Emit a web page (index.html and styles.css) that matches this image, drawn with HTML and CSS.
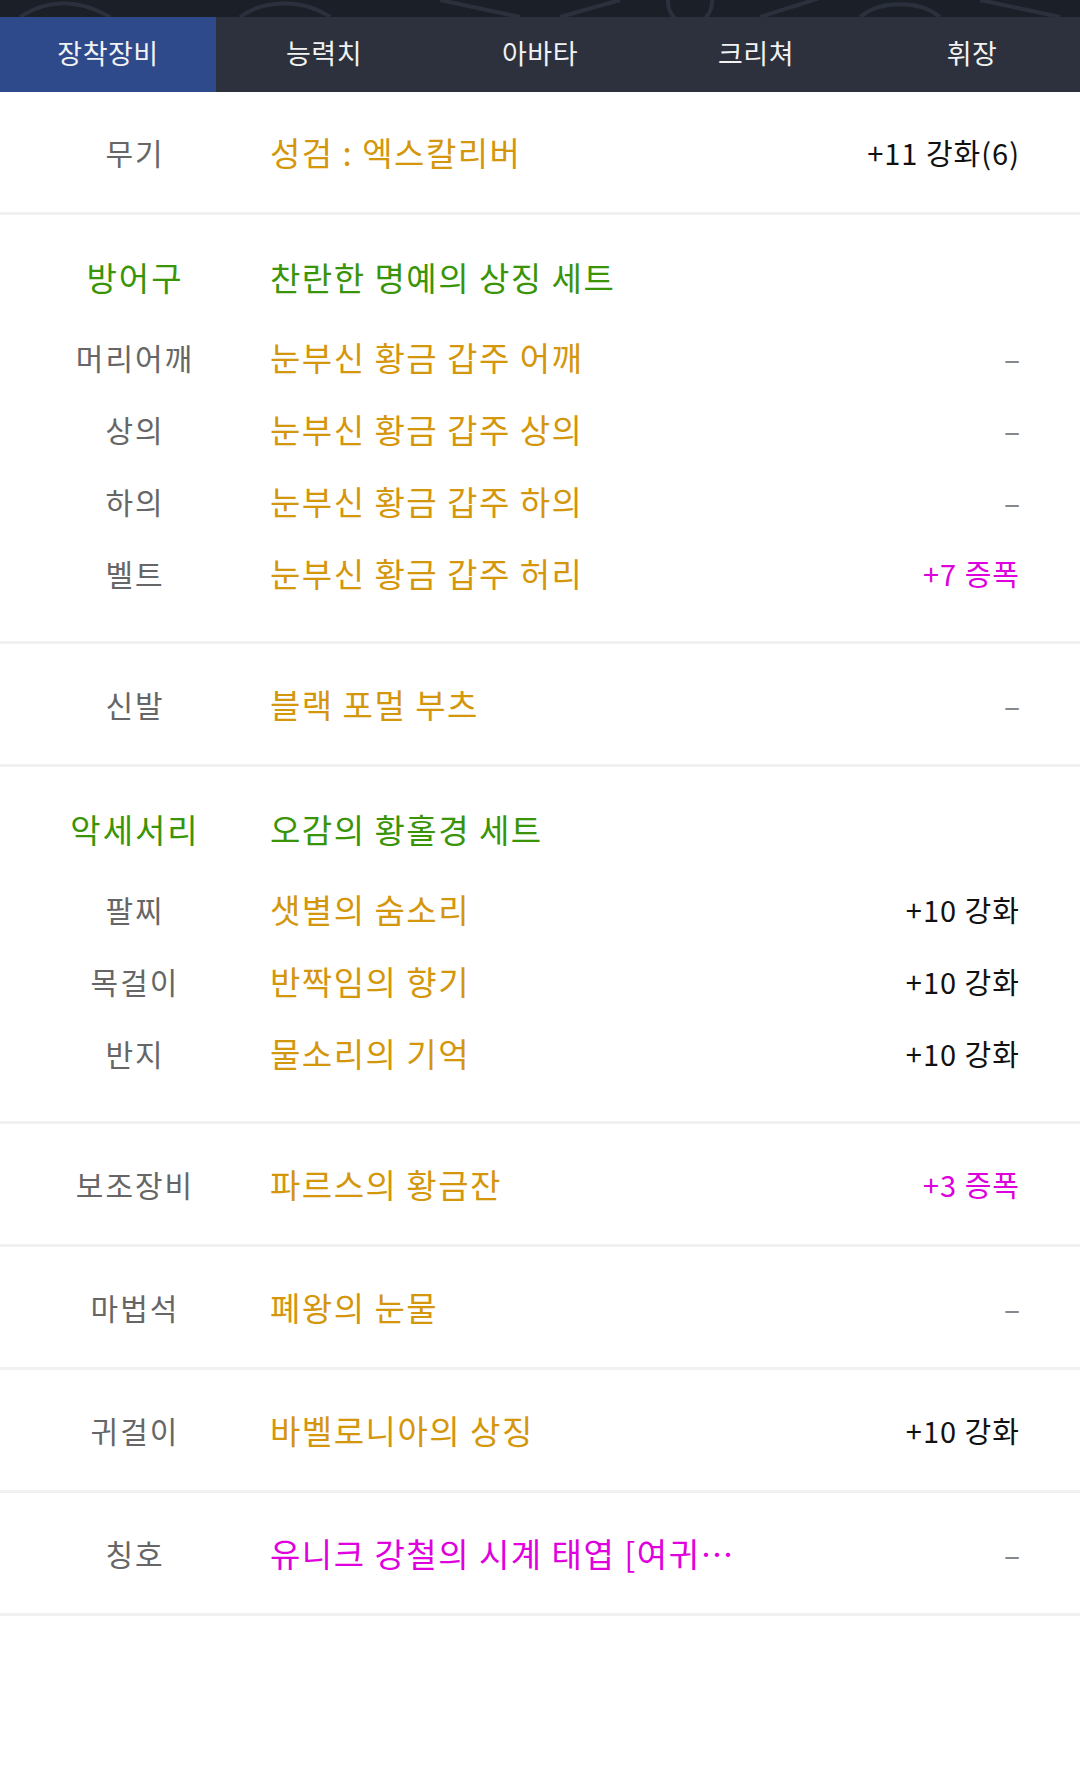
FILE: index.html
```html
<!DOCTYPE html>
<html>
<head>
    <meta charset="utf-8">
    <link rel="stylesheet" href="styles.css">
</head>
<body>
    <div class="banner">
        <svg class="banner-art" viewBox="0 0 1080 17" preserveAspectRatio="none">
            <path d="M20 17 C40 4 70 -6 110 17" />
            <path d="M240 17 C260 2 300 -4 330 17" />
            <path d="M440 0 L520 17 M560 17 L620 0" />
            <circle cx="690" cy="2" r="22" />
            <path d="M760 17 L820 -2 M860 17 C880 0 920 0 940 17" />
            <path d="M980 0 L1060 17" />
        </svg>
    </div>

    <div class="tabs">
        <div class="tab tab-active">장착장비</div>
        <div class="tab">능력치</div>
        <div class="tab">아바타</div>
        <div class="tab">크리쳐</div>
        <div class="tab">휘장</div>
    </div>

    <div class="section">
        <div class="row">
            <span class="slot">무기</span>
            <span class="item item-gold">성검 : 엑스칼리버</span>
            <span class="value">+11 강화(6)</span>
        </div>
    </div>

    <div class="section section-set">
        <div class="row row-head">
            <span class="slot slot-set">방어구</span>
            <span class="item item-set">찬란한 명예의 상징 세트</span>
        </div>
        <div class="row">
            <span class="slot">머리어깨</span>
            <span class="item item-gold">눈부신 황금 갑주 어깨</span>
            <span class="value value-none">–</span>
        </div>
        <div class="row">
            <span class="slot">상의</span>
            <span class="item item-gold">눈부신 황금 갑주 상의</span>
            <span class="value value-none">–</span>
        </div>
        <div class="row">
            <span class="slot">하의</span>
            <span class="item item-gold">눈부신 황금 갑주 하의</span>
            <span class="value value-none">–</span>
        </div>
        <div class="row">
            <span class="slot">벨트</span>
            <span class="item item-gold">눈부신 황금 갑주 허리</span>
            <span class="value value-amp">+7 증폭</span>
        </div>
    </div>

    <div class="section">
        <div class="row">
            <span class="slot">신발</span>
            <span class="item item-gold">블랙 포멀 부츠</span>
            <span class="value value-none">–</span>
        </div>
    </div>

    <div class="section section-set">
        <div class="row row-head">
            <span class="slot slot-set">악세서리</span>
            <span class="item item-set">오감의 황홀경 세트</span>
        </div>
        <div class="row">
            <span class="slot">팔찌</span>
            <span class="item item-gold">샛별의 숨소리</span>
            <span class="value">+10 강화</span>
        </div>
        <div class="row">
            <span class="slot">목걸이</span>
            <span class="item item-gold">반짝임의 향기</span>
            <span class="value">+10 강화</span>
        </div>
        <div class="row">
            <span class="slot">반지</span>
            <span class="item item-gold">물소리의 기억</span>
            <span class="value">+10 강화</span>
        </div>
    </div>

    <div class="section">
        <div class="row">
            <span class="slot">보조장비</span>
            <span class="item item-gold">파르스의 황금잔</span>
            <span class="value value-amp">+3 증폭</span>
        </div>
    </div>

    <div class="section">
        <div class="row">
            <span class="slot">마법석</span>
            <span class="item item-gold">폐왕의 눈물</span>
            <span class="value value-none">–</span>
        </div>
    </div>

    <div class="section">
        <div class="row">
            <span class="slot">귀걸이</span>
            <span class="item item-gold">바벨로니아의 상징</span>
            <span class="value">+10 강화</span>
        </div>
    </div>

    <div class="section">
        <div class="row">
            <span class="slot">칭호</span>
            <span class="item item-unique">유니크 강철의 시계 태엽 [여귀…</span>
            <span class="value value-none">–</span>
        </div>
    </div>
</body>
</html>
```

FILE: styles.css
```css
body {
    margin: 0;
    width: 1080px;
    background: #fff;
    font-family: "Noto Sans CJK KR", "Noto Sans", sans-serif;
}

.banner {
    height: 17px;
    background: #1b1f28;
    overflow: hidden;
}

.banner-art {
    display: block;
    width: 100%;
    height: 17px;
}

.banner-art path,
.banner-art circle {
    fill: none;
    stroke: #2a303c;
    stroke-width: 4;
}

.tabs {
    display: flex;
    height: 75px;
    background: #2c313d;
}

.tab {
    flex: 1;
    display: flex;
    align-items: center;
    justify-content: center;
    color: #f2f2f2;
    font-size: 27px;
    letter-spacing: 0.5px;
    padding-bottom: 4px;
}

.tab-active {
    background: #2e4a8b;
}

.section {
    padding: 24px 0;
    border-bottom: 3px solid #f1f1f1;
}

.section-set {
    padding: 26px 0 32px 0;
}

.row {
    display: flex;
    align-items: center;
    height: 72px;
}

.row-head {
    margin-bottom: 8px;
}

.slot {
    width: 270px;
    flex-shrink: 0;
    text-align: center;
    font-size: 30px;
    letter-spacing: 2px;
    color: #666;
}

.slot-set {
    font-size: 33px;
    letter-spacing: 2px;
    color: #3a9407;
}

.item {
    flex: 1;
    font-size: 33px;
    letter-spacing: 1.5px;
    white-space: nowrap;
    overflow: hidden;
    text-overflow: ellipsis;
}

.item-gold {
    color: #d4960b;
}

.item-set {
    color: #3a9407;
}

.item-unique {
    color: #e000dd;
}

.value {
    flex-shrink: 0;
    padding-right: 60px;
    padding-left: 20px;
    font-size: 29px;
    letter-spacing: 1px;
    color: #111;
}

.value-none {
    color: #888;
    font-size: 30px;
    letter-spacing: 0;
}

.value-amp {
    color: #dd00dd;
}
```
